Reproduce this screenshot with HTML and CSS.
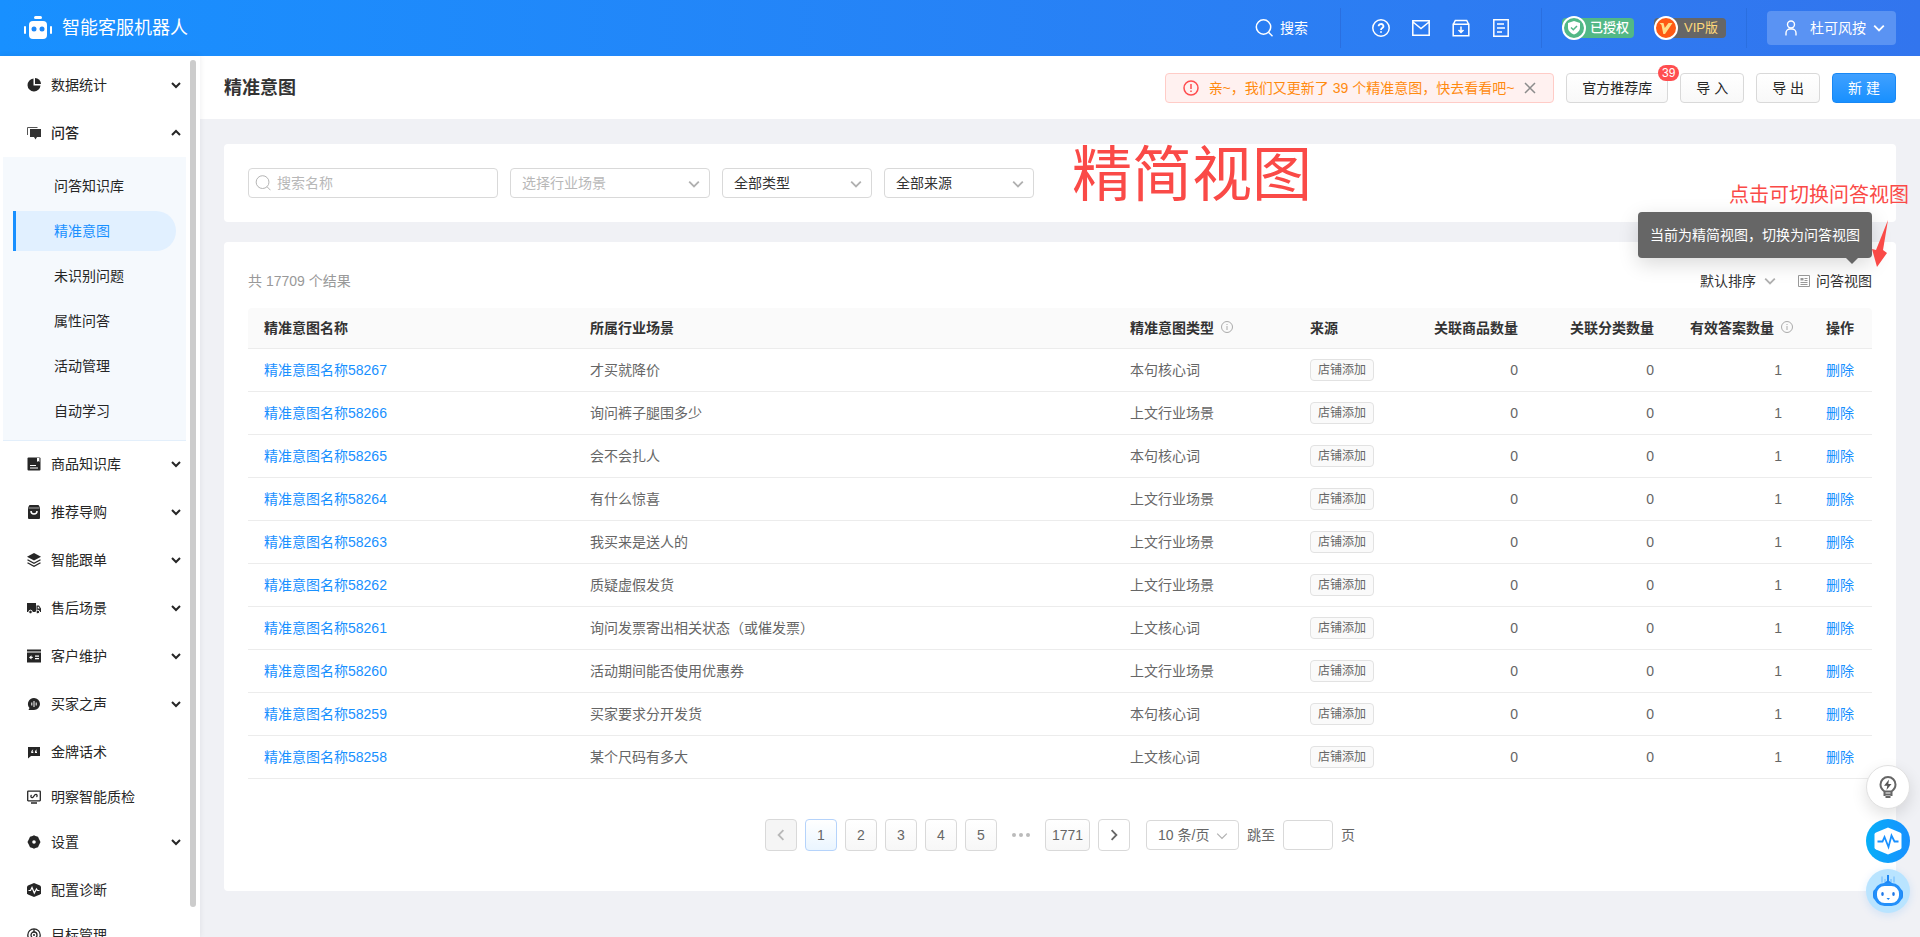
FILE: index.html
```html
<!DOCTYPE html>
<html lang="zh-CN">
<head>
<meta charset="utf-8">
<title>精准意图 - 智能客服机器人</title>
<link rel="stylesheet" href="styles.css">
</head>
<body>
<svg class="defs" aria-hidden="true">
  <symbol id="down" viewBox="0 0 10 10"><path d="M1 3l4 4 4-4" fill="none" stroke="currentColor"/></symbol>
  <symbol id="info" viewBox="0 0 14 14"><g fill="none" stroke="currentColor"><circle cx="7" cy="7" r="5.5"/><path d="M7 6v4M7 4v1"/></g></symbol>
  <symbol id="search" viewBox="0 0 18 18"><g fill="none" stroke="currentColor"><circle cx="8.5" cy="8" r="7.2"/><path d="M13.5 13.2l4 4"/></g></symbol>
</svg>

<header class="topbar">
  <a class="brand" href="#">
    <svg width="28" height="24" viewBox="0 0 28 24"><g fill="#fff"><rect x="10" y="0" width="8" height="3" rx="1.5"/><rect x="5" y="5" width="18" height="18" rx="4"/><rect x="0" y="10" width="2" height="8" rx="1"/><rect x="26" y="10" width="2" height="8" rx="1"/></g><circle cx="10" cy="13" r="2.5" fill="#1e88f8"/><circle cx="18" cy="13" r="2.5" fill="#1e88f8"/></svg>
    <span>智能客服机器人</span>
  </a>
  <button class="top-search"><svg class="s18 thick"><use href="#search"/></svg>搜索</button>
  <nav class="top-icons" aria-label="工具">
    <button aria-label="帮助"><svg class="s18" viewBox="0 0 18 18"><g fill="none" stroke="#fff" stroke-width="1.5"><circle cx="9" cy="9" r="8.2"/><path d="M6.6 7.2a2.4 2.2 0 1 1 3.6 1.9c-.8.5-1.2.9-1.2 1.9M9 12.2v1.6" stroke-width="1.8"/></g></svg></button>
    <button aria-label="消息"><svg class="s18" viewBox="0 0 18 18"><path d="M.8 1.8h16.4v14.4H.8zM1 3l8 6.500L17 3" fill="none" stroke="#fff" stroke-width="1.5"/></svg></button>
    <button aria-label="下载"><svg class="s18" viewBox="0 0 18 18"><path d="M1.200 5.200h15.600v11.600H1.200zM1.500 5l1.800-3.500h11.400L16.500 5M9 7.500v6M6.500 11L9 13.500l2.500-2.500" fill="none" stroke="#fff" stroke-width="1.5"/></svg></button>
    <button aria-label="文档"><svg class="s18" viewBox="0 0 18 18"><path d="M1.800.8h14.400v16.400H1.800zM5 5h7M5 9h8M5 13h5" fill="none" stroke="#fff" stroke-width="1.5"/></svg></button>
  </nav>
  <div class="plans">
    <span class="plan plan-ok"><svg width="24" height="24" viewBox="0 0 24 24"><circle cx="12" cy="12" r="11" fill="#52b886" stroke="#fff" stroke-width="2"/><path d="M12 5l6 2v4.500c0 3.500-3 5.800-6 7-3-1.200-6-3.500-6-7V7z" fill="#fff"/><path d="M9 11.500l2.300 2.300L15 10" fill="none" stroke="#52b886" stroke-width="1.500"/></svg>已授权</span>
    <span class="plan plan-vip"><svg width="24" height="24" viewBox="0 0 24 24"><circle cx="12" cy="12" r="11" fill="#ff5a14" stroke="#fff" stroke-width="2"/><path d="M5.500 7h4l1.300 5L14.500 7h4L11 18H9.300L7.500 9z" fill="#ffdf8a"/></svg>VIP版</span>
  </div>
  <button class="user"><svg width="12" height="16" viewBox="0 0 12 16"><g fill="none" stroke="#fff" stroke-width="1.400"><circle cx="6" cy="4.500" r="3.500"/><path d="M1 15.500V13a4 4 0 0 1 4-4h2a4 4 0 0 1 4 4v2.500"/></g></svg><span>杜可风按</span><svg class="s12 thick"><use href="#down"/></svg></button>
</header>

<div class="shell">
  <aside class="side">
    <nav class="menu" aria-label="主菜单">
      <a class="item parent" href="#"><svg class="s14" viewBox="0 0 14 14"><path d="M6.500.5A6.500 6.500 0 1 0 13.500 7.500h-7z" fill="#262626"/><path d="M8 0a6 6 0 0 1 6 6H8z" fill="#262626"/></svg>数据统计<svg class="arrow"><use href="#down"/></svg></a>
      <a class="item parent open" href="#"><svg class="s14" viewBox="0 0 14 14"><path d="M.5 9V1.500h10" fill="none" stroke="#555"/><path d="M3 3h11v8h-4l-1.500 2.500L7 11H3z" fill="#333"/></svg>问答<svg class="arrow up"><use href="#down"/></svg></a>
      <div class="submenu">
        <a href="#">问答知识库</a>
        <a href="#" class="active" aria-current="page">精准意图</a>
        <a href="#">未识别问题</a>
        <a href="#">属性问答</a>
        <a href="#">活动管理</a>
        <a href="#">自动学习</a>
      </div>
      <a class="item parent" href="#"><svg class="s14" viewBox="0 0 14 14"><rect x=".5" y=".5" width="13" height="13" rx="1" fill="#262626"/><path d="M10 1v4l1.200-1 1.200 1V1zM3 8h6v1H3zM3 10.500h8v1H3z" fill="#fff"/></svg>商品知识库<svg class="arrow"><use href="#down"/></svg></a>
      <a class="item parent" href="#"><svg class="s14" viewBox="0 0 14 14"><path d="M2.500 0h9L13 2.500V13a1 1 0 0 1-1 1H2a1 1 0 0 1-1-1V2.500z" fill="#262626"/><path d="M1.500 3h11" stroke="#aaa"/><path d="M4 6a3 3 0 0 0 6 0" fill="none" stroke="#fff" stroke-width="1.500"/></svg>推荐导购<svg class="arrow"><use href="#down"/></svg></a>
      <a class="item parent" href="#"><svg class="s14" viewBox="0 0 14 14"><path d="M7 0l7 3.800-7 3.700L0 3.800z" fill="#262626"/><path d="M.5 6.800L7 10.300l6.500-3.500M.5 9.800L7 13.300l6.500-3.500" fill="none" stroke="#262626" stroke-width="1.300"/></svg>智能跟单<svg class="arrow"><use href="#down"/></svg></a>
      <a class="item parent" href="#"><svg class="s14" viewBox="0 0 14 14"><path d="M0 2h9v9H0zM9.500 4.500H12l2 3V11H9.500z" fill="#262626"/><path d="M10.700 5.700h1l1 1.800h-2z" fill="#fff"/><circle cx="3.500" cy="11" r="1.800" fill="#262626" stroke="#fff"/><circle cx="10.800" cy="11" r="1.800" fill="#262626" stroke="#fff"/></svg>售后场景<svg class="arrow"><use href="#down"/></svg></a>
      <a class="item parent" href="#"><svg class="s14" viewBox="0 0 14 14"><path d="M0 .5h14v2H0zM0 3.500h14v10H0z" fill="#262626"/><path d="M2 8.500l2.500-2.300v1.500h1.200v1.200H4.500v1.500zM8 6.500h4v1.200H8zM8 9h4v1.200H8z" fill="#fff"/></svg>客户维护<svg class="arrow"><use href="#down"/></svg></a>
      <a class="item parent" href="#"><svg class="s14" viewBox="0 0 14 14"><path d="M7 1a6 6 0 1 1 0 12H1.500l1-2A6 6 0 0 1 7 1z" fill="#262626"/><path d="M4.800 5.500v3M7 4v6M9.200 5.500v3" stroke="#fff"/></svg>买家之声<svg class="arrow"><use href="#down"/></svg></a>
      <a class="item" href="#"><svg class="s14" viewBox="0 0 14 14"><path d="M1 2h12v9H4l-3 2.500z" fill="#262626"/><path d="M6.300 4.500C4.500 5 4 6.500 4.300 8h2V6.500h-1zM10 4.500C8.200 5 7.700 6.500 8 8h2V6.500H9z" fill="#fff"/></svg>金牌话术</a>
      <a class="item" href="#"><svg class="s14" viewBox="0 0 14 14"><g fill="none" stroke="#262626" stroke-width="1.300"><rect x=".7" y="1.200" width="12.600" height="9.600" rx=".5"/><path d="M4 13h6M4.500 5c-1.500 1.500 0 3.500 1.500 2.300L8 4.700c1.500-1.200 3 .8 1.500 2.300"/></g></svg>明察智能质检</a>
      <a class="item parent" href="#"><svg class="s14" viewBox="0 0 14 14"><path d="M5.500 1L7 .2 8.500 1l2.500.8 1 2.200L13.500 7 12 10l-1 2.200-2.500.8-1.500.8L5.500 13 3 12.200 2 10 .5 7 2 4l1-2.200z" fill="#262626"/><circle cx="7" cy="7" r="1.800" fill="#fff"/></svg>设置<svg class="arrow"><use href="#down"/></svg></a>
      <a class="item" href="#"><svg class="s14" viewBox="0 0 14 14"><path d="M7 0l6 2.500 1 1v7l-1 1L7 14l-6-2.500-1-1v-7l1-1z" fill="#262626"/><path d="M1.500 7.500h2l1.500-3 2.300 5.500L9.500 6l1 1.500h2" fill="none" stroke="#fff" stroke-width="1.200"/></svg>配置诊断</a>
      <a class="item" href="#"><svg class="s14" viewBox="0 0 14 14"><g fill="none" stroke="#262626" stroke-width="1.300"><circle cx="7" cy="7" r="6.200"/><circle cx="7" cy="7" r="3"/><path d="M7 4V1"/></g><circle cx="7" cy="7" r="1" fill="#262626"/></svg>目标管理</a>
    </nav>
    <div class="scroll-thumb"></div>
  </aside>

  <main class="main">
    <div class="page-head">
      <h1>精准意图</h1>
      <div class="alert" role="alert">
        <svg class="s16" viewBox="0 0 16 16"><g fill="none" stroke="#ff4d4f" stroke-width="1.500"><circle cx="8" cy="8" r="7"/><path d="M8 4v5M8 10.500V12"/></g></svg>
        <span>亲~，我们又更新了 39 个精准意图，快去看看吧~</span>
        <button aria-label="关闭"><svg class="s12" viewBox="0 0 12 12"><path d="M1 1l10 10M11 1L1 11" stroke="#8c8c8c" stroke-width="1.500"/></svg></button>
      </div>
      <button class="btn">官方推荐库<span class="count">39</span></button>
      <button class="btn">导 入</button>
      <button class="btn">导 出</button>
      <button class="btn primary">新 建</button>
    </div>

    <div class="content">
      <section class="card filters">
        <label class="search"><svg class="s16"><use href="#search"/></svg><input type="text" placeholder="搜索名称" aria-label="搜索名称"></label>
        <span class="select wide"><select class="empty" aria-label="行业场景"><option>选择行业场景</option></select><svg class="s12"><use href="#down"/></svg></span>
        <span class="select"><select aria-label="类型"><option>全部类型</option></select><svg class="s12"><use href="#down"/></svg></span>
        <span class="select"><select aria-label="来源"><option>全部来源</option></select><svg class="s12"><use href="#down"/></svg></span>
        <strong class="mark-title">精简视图</strong>
      </section>

      <section class="card list">
        <div class="list-head">
          <span class="total">共 17709 个结果</span>
          <button class="text-btn">默认排序<svg class="s12 pale"><use href="#down"/></svg></button>
          <div class="view">
            <button class="text-btn"><svg width="12" height="14" viewBox="0 0 12 14"><path d="M.5 1.500h11v11H.5z" fill="none" stroke="#999"/><path d="M2.500 4h3v2.500h-3zM6.500 4h3v1h-3zM6.500 6h3v1h-3zM2.500 8h7v1h-7zM2.500 10h7v1h-7z" fill="#999"/></svg>问答视图</button>
            <div class="tooltip" role="tooltip">当前为精简视图，切换为问答视图</div>
            <span class="mark-note">点击可切换问答视图</span>
            <svg class="mark-arrow" width="16" height="48" viewBox="0 0 16 48"><path d="M16 1L11 31l4 3L5 48 0 30l4 1z" fill="#fa4a47"/></svg>
          </div>
        </div>

        <table class="grid">
          <colgroup><col class="c-name"><col><col class="c-type"><col class="c-src"><col class="c-goods"><col class="c-cat"><col class="c-ans"><col class="c-op"></colgroup>
          <thead><tr><th>精准意图名称</th><th>所属行业场景</th><th>精准意图类型<svg class="s14 tip"><use href="#info"/></svg></th><th>来源</th><th class="num">关联商品数量</th><th class="num">关联分类数量</th><th class="num">有效答案数量<svg class="s14 tip"><use href="#info"/></svg></th><th>操作</th></tr></thead>
          <tbody>
            <tr><td><a href="#">精准意图名称58267</a></td><td>才买就降价</td><td>本句核心词</td><td><span class="tag">店铺添加</span></td><td class="num">0</td><td class="num">0</td><td class="num ans">1</td><td><a href="#">删除</a></td></tr>
            <tr><td><a href="#">精准意图名称58266</a></td><td>询问裤子腿围多少</td><td>上文行业场景</td><td><span class="tag">店铺添加</span></td><td class="num">0</td><td class="num">0</td><td class="num ans">1</td><td><a href="#">删除</a></td></tr>
            <tr><td><a href="#">精准意图名称58265</a></td><td>会不会扎人</td><td>本句核心词</td><td><span class="tag">店铺添加</span></td><td class="num">0</td><td class="num">0</td><td class="num ans">1</td><td><a href="#">删除</a></td></tr>
            <tr><td><a href="#">精准意图名称58264</a></td><td>有什么惊喜</td><td>上文行业场景</td><td><span class="tag">店铺添加</span></td><td class="num">0</td><td class="num">0</td><td class="num ans">1</td><td><a href="#">删除</a></td></tr>
            <tr><td><a href="#">精准意图名称58263</a></td><td>我买来是送人的</td><td>上文行业场景</td><td><span class="tag">店铺添加</span></td><td class="num">0</td><td class="num">0</td><td class="num ans">1</td><td><a href="#">删除</a></td></tr>
            <tr><td><a href="#">精准意图名称58262</a></td><td>质疑虚假发货</td><td>上文行业场景</td><td><span class="tag">店铺添加</span></td><td class="num">0</td><td class="num">0</td><td class="num ans">1</td><td><a href="#">删除</a></td></tr>
            <tr><td><a href="#">精准意图名称58261</a></td><td>询问发票寄出相关状态（或催发票）</td><td>上文核心词</td><td><span class="tag">店铺添加</span></td><td class="num">0</td><td class="num">0</td><td class="num ans">1</td><td><a href="#">删除</a></td></tr>
            <tr><td><a href="#">精准意图名称58260</a></td><td>活动期间能否使用优惠券</td><td>上文行业场景</td><td><span class="tag">店铺添加</span></td><td class="num">0</td><td class="num">0</td><td class="num ans">1</td><td><a href="#">删除</a></td></tr>
            <tr><td><a href="#">精准意图名称58259</a></td><td>买家要求分开发货</td><td>本句核心词</td><td><span class="tag">店铺添加</span></td><td class="num">0</td><td class="num">0</td><td class="num ans">1</td><td><a href="#">删除</a></td></tr>
            <tr><td><a href="#">精准意图名称58258</a></td><td>某个尺码有多大</td><td>上文核心词</td><td><span class="tag">店铺添加</span></td><td class="num">0</td><td class="num">0</td><td class="num ans">1</td><td><a href="#">删除</a></td></tr>
          </tbody>
        </table>

        <nav class="pager" aria-label="分页">
          <button class="page" disabled aria-label="上一页"><svg class="s12 prev"><use href="#down"/></svg></button>
          <button class="page current" aria-current="page">1</button>
          <button class="page">2</button>
          <button class="page">3</button>
          <button class="page">4</button>
          <button class="page">5</button>
          <span class="more"><i></i><i></i><i></i></span>
          <button class="page">1771</button>
          <button class="page next" aria-label="下一页"><svg class="s12"><use href="#down"/></svg></button>
          <span class="select size"><select aria-label="每页条数"><option>10 条/页</option></select><svg class="s12"><use href="#down"/></svg></span>
          <label class="jump">跳至<input type="text" aria-label="页码">页</label>
        </nav>
      </section>
    </div>
  </main>
</div>

<div class="floaters">
  <button class="fab idea" aria-label="建议"><svg width="18" height="22" viewBox="0 0 18 22"><path d="M5.500 15.500C3.500 14 1.500 12 1.500 8.500a7.500 7.500 0 0 1 15 0c0 3.500-2 5.500-4 7zM5.500 18.500h7M6.500 21h5M5.500 15.500V20M12.500 15.500V20" fill="none" stroke="#666" stroke-width="2"/><path d="M10 3.500L5 9.800h3.300L7.500 14l5-6H9.300z" fill="#555"/></svg></button>
  <button class="fab pulse" aria-label="诊断"><svg width="28" height="28" viewBox="0 0 28 28"><path d="M14 .5l12 5q1.500.7 1.500 2v13q0 1.300-1.500 2l-12 5-12-5q-1.500-.7-1.500-2v-13q0-1.300 1.500-2z" fill="#fff"/><path d="M3.500 14.500h5l2-4.500 4 10 3-11.500 3 6h4" fill="none" stroke="#1890ff" stroke-width="1.800"/></svg></button>
  <button class="fab bot" aria-label="机器人"><svg width="32" height="32" viewBox="0 0 32 32"><path d="M10 1.500v6M13 4v4M19 4v4M22 1.500v6" stroke="#69b8ff"/><path d="M16 0v9" stroke="#1e88f5" stroke-width="2"/><path d="M11 9l5-4 5 4z" fill="#1e88f5"/><rect x="1" y="14" width="30" height="11" rx="4" fill="#1e88f5"/><rect x="3.500" y="9.500" width="25" height="20" rx="9" fill="#fff" stroke="#2490fa" stroke-width="3"/><ellipse cx="10.500" cy="19" rx="1.300" ry="2" fill="#1e78e8"/><ellipse cx="21.500" cy="19" rx="1.300" ry="2" fill="#1e78e8"/><path d="M14.500 23h3.500l-1.700 2z" fill="#1e88f5"/></svg></button>
</div>
</body>
</html>
```
FILE: styles.css
```css
* { box-sizing: border-box; }
body {
  margin: 0;
  height: 100vh;
  display: flex;
  flex-direction: column;
  overflow: hidden;
  background: #f0f1f5;
  color: #333;
  font: 14px/20px "Liberation Sans", "Noto Sans CJK SC", sans-serif;
}
button, input, select { font: inherit; color: inherit; }
button { border: 0; padding: 0; background: none; cursor: pointer; }
a { color: inherit; text-decoration: none; }
svg { display: block; flex: none; }
.defs { position: absolute; width: 0; height: 0; }
.s12 { width: 12px; height: 12px; }
.s14 { width: 14px; height: 14px; }
.s16 { width: 16px; height: 16px; }
.s18 { width: 18px; height: 18px; }
.thick { stroke-width: 1.5; }

/* Top bar */
.topbar {
  flex: none;
  height: 56px;
  padding: 0 24px;
  display: flex;
  align-items: center;
  background: linear-gradient(90deg, #1890ff, #2d7cf2 75%, #3275ee);
  color: #fff;
}
.brand { display: flex; align-items: center; gap: 10px; margin-right: auto; font-size: 18px; }
.top-search { display: flex; align-items: center; gap: 7px; padding-right: 32px; }
.top-icons {
  height: 40px;
  padding: 0 31px;
  display: flex;
  align-items: center;
  gap: 22px;
  border: solid #2a6fe0;
  border-width: 0 1px;
}
.plans {
  height: 40px;
  padding: 0 20px;
  display: flex;
  align-items: center;
  gap: 20px;
  border-right: 1px solid #2a6fe0;
}
.plan {
  height: 20px;
  padding-right: 5px;
  display: flex;
  align-items: center;
  gap: 4px;
  border-radius: 4px 4px 4px 12px;
  font-size: 13px;
}
.plan-ok { background: #52b886; font-weight: 500; }
.plan-vip { background: #666; color: #ffd979; gap: 6px; padding-right: 8px; }
.user {
  height: 34px;
  margin-left: 20px;
  padding: 0 11px 0 18px;
  display: flex;
  align-items: center;
  gap: 7px;
  border-radius: 4px;
  background: #5a93f3;
}
.user span { padding-left: 6px; }

/* Sidebar */
.shell { flex: 1; min-height: 0; display: grid; grid-template-columns: 200px 1fr; }
.side { position: relative; overflow: hidden; background: #fff; box-shadow: 0 0 6px #00152914; }
.menu { width: 190px; padding: 9px 4px 0 3px; display: flex; flex-direction: column; }
.item {
  height: 40px;
  margin-bottom: 5px;
  padding: 0 5px 0 24px;
  display: flex;
  flex: none;
  align-items: center;
  gap: 10px;
  color: #262626;
}
.item.parent { margin-bottom: 8px; }
.item.open { margin-bottom: 4px; font-weight: 500; }
.arrow { width: 10px; height: 10px; margin-left: auto; stroke-width: 2; }
.up { transform: rotate(180deg); }
.submenu {
  margin-bottom: 3px;
  padding: 9px 10px;
  display: flex;
  flex: none;
  flex-direction: column;
  gap: 5px;
  background: #f5f9fd;
  border-bottom: 1px solid #e3effb;
}
.submenu a {
  height: 40px;
  padding-left: 38px;
  border-left: 3px solid transparent;
  line-height: 40px;
  color: #262626;
}
.submenu .active {
  border-color: #1890ff;
  border-radius: 0 20px 20px 0;
  background: #e1f0ff;
  color: #1890ff;
}
.scroll-thumb {
  position: absolute;
  inset: 4px 4px 30px auto;
  width: 6px;
  border-radius: 3px;
  background: #ccc;
}

/* Page header */
.main { min-width: 0; }
.page-head {
  height: 63px;
  padding: 0 24px;
  display: flex;
  align-items: center;
  gap: 12px;
  background: #fff;
}
.page-head h1 { margin: 0 auto 0 0; font-size: 18px; font-weight: 700; }
.alert {
  height: 30px;
  padding: 0 17px;
  display: flex;
  align-items: center;
  gap: 10px;
  border: 1px solid #ffccc7;
  border-radius: 4px;
  background: #fff1f0;
  color: #ff8a0f;
}
.btn {
  position: relative;
  height: 30px;
  padding: 0 15px;
  border: 1px solid #d9d9d9;
  border-radius: 4px;
  background: linear-gradient(#fff, #f8f8f8);
  color: #262626;
}
.primary { border-color: #1888f5; background: linear-gradient(#40a0ff, #1890ff); color: #fff; }
.count {
  position: absolute;
  top: -9px;
  right: -12px;
  padding: 0 4px;
  border-radius: 8px;
  background: #ff4d4f;
  color: #fff;
  font-size: 12px;
  line-height: 16px;
}

/* Cards */
.content { padding: 25px 24px; display: flex; flex-direction: column; gap: 20px; }
.card { position: relative; border-radius: 4px; background: #fff; }
.filters { padding: 24px; display: flex; gap: 12px; }
.search {
  width: 250px;
  height: 30px;
  padding: 0 6px;
  display: flex;
  align-items: center;
  gap: 6px;
  border: 1px solid #d9d9d9;
  border-radius: 4px;
  color: #aaa;
}
.search input { flex: 1; min-width: 0; padding: 0; border: 0; outline: 0; background: none; color: #333; }
.search input::placeholder { color: #b8b8b8; }
.select { position: relative; width: 150px; height: 30px; }
.select.wide { width: 200px; }
.select select {
  width: 100%;
  height: 30px;
  padding: 0 24px 0 11px;
  appearance: none;
  border: 1px solid #d9d9d9;
  border-radius: 4px;
  background: #fff;
}
.select .empty { color: #b8b8b8; }
.select svg { position: absolute; right: 10px; top: 10px; color: #b0b0b0; stroke-width: 1.5; pointer-events: none; }
.mark-title {
  position: absolute;
  left: 848px;
  top: 0;
  color: #fa4a47;
  font-size: 60px;
  font-weight: 400;
  line-height: 64px;
}

/* List */
.list { padding: 24px 24px 40px; }
.list-head { height: 30px; margin-bottom: 12px; display: flex; align-items: center; gap: 22px; }
.total { margin-right: auto; color: #999; }
.text-btn { display: flex; align-items: center; gap: 6px; }
.text-btn .pale { margin-left: 2px; color: #b0b0b0; stroke-width: 1.5; }
.view { position: relative; }
.tooltip {
  position: absolute;
  right: 0;
  bottom: 33px;
  z-index: 2;
  padding: 13px 12px;
  border-radius: 4px;
  background: #666;
  color: #fff;
  white-space: nowrap;
  box-shadow: 0 6px 20px #00000026;
}
.tooltip::after {
  content: "";
  position: absolute;
  top: 100%;
  right: 14px;
  border: solid transparent;
  border-width: 6px 6px 0;
  border-top-color: #666;
}
.mark-note {
  position: absolute;
  right: -37px;
  bottom: 82px;
  z-index: 3;
  color: #fa4a47;
  font-size: 20px;
  line-height: 28px;
  white-space: nowrap;
}
.mark-arrow { position: absolute; right: -16px; bottom: 24px; z-index: 3; }

.grid { width: 100%; table-layout: fixed; border-spacing: 0; }
.grid .c-name { width: 326px; }
.grid .c-type { width: 180px; }
.grid .c-src, .grid .c-goods { width: 120px; }
.grid .c-cat { width: 136px; }
.grid .c-ans { width: 140px; }
.grid .c-op { width: 62px; }
.grid th, .grid td {
  height: 43px;
  padding: 0 16px;
  border-bottom: 1px solid #ececec;
  text-align: left;
  white-space: nowrap;
  color: #666;
}
.grid th { height: 41px; background: #fafafa; color: #333; font-weight: 700; }
.grid th:first-child { border-top-left-radius: 4px; }
.grid th:last-child { border-top-right-radius: 4px; }
.grid .num { text-align: right; }
.grid .ans { padding-right: 28px; }
.grid a { color: #1890ff; }
.tip { display: inline-block; margin-left: 6px; vertical-align: -1px; color: #aaa; }
.tag {
  display: inline-block;
  padding: 0 7px;
  border: 1px solid #e2e2e2;
  border-radius: 4px;
  background: #fafafa;
  font-size: 12px;
  vertical-align: middle;
}

/* Pagination */
.pager { margin-top: 40px; display: flex; align-items: center; justify-content: center; gap: 8px; color: #666; }
.page {
  min-width: 32px;
  height: 32px;
  padding: 0 6px;
  display: flex;
  align-items: center;
  justify-content: center;
  border: 1px solid #d9d9d9;
  border-radius: 4px;
  background: linear-gradient(#fff, #f7f7f7);
}
.page svg { stroke-width: 1.5; }
.page:disabled { background: #f5f5f5; color: #b8b8b8; }
.page.current { border-color: #b5d3fb; background: linear-gradient(#fff, #eaf5ff); }
.page.next { background: #fff; }
.next svg { transform: rotate(-90deg); }
.prev { transform: rotate(90deg); }
.more { width: 32px; display: flex; justify-content: center; gap: 3px; }
.more i { width: 4px; height: 4px; border-radius: 2px; background: #bbb; }
.select.size { width: 93px; margin-left: 8px; }
.select.size svg { right: 11px; stroke-width: 1; }
.jump { display: flex; align-items: center; gap: 8px; }
.jump input { width: 50px; height: 30px; border: 1px solid #d9d9d9; border-radius: 4px; }

/* Floating buttons */
.floaters { position: fixed; right: 10px; bottom: 24px; z-index: 5; display: flex; flex-direction: column; gap: 6px; }
.fab { width: 44px; height: 44px; display: grid; place-items: center; border-radius: 50%; }
.idea { margin-bottom: 4px; border: 1px solid #e0e0e0; background: #fff; box-shadow: 0 6px 16px #0000001f; }
.pulse { background: linear-gradient(90deg, #07aff8, #1890ff); }
.bot { background: #b9e4ff; box-shadow: 0 2px 8px #1890ff26; }
```
